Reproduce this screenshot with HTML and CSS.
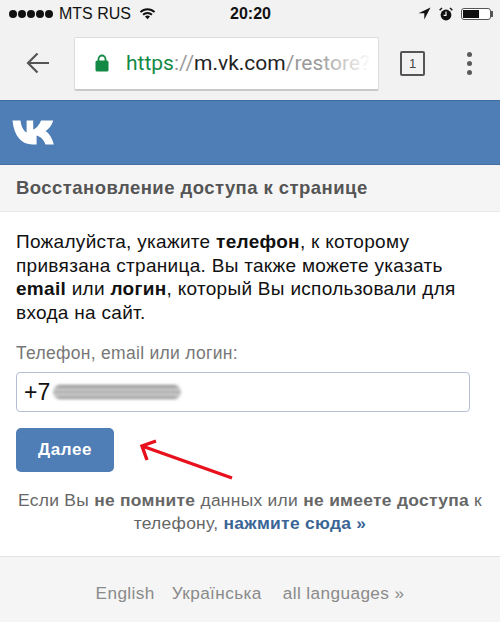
FILE: index.html
```html
<!DOCTYPE html>
<html lang="ru">
<head>
  <meta charset="UTF-8">
  <title>Восстановление доступа к странице</title>
  <meta name="viewport" content="width=device-width, initial-scale=1">
  <link rel="stylesheet" href="styles.css">
</head>
<body>
  <div class="statusbar">
    <div class="status-left">
      <span class="signal"><i></i><i></i><i></i><i></i><i></i></span>
      <span class="carrier">MTS RUS</span>
      <svg class="wifi" width="17" height="13" viewBox="0 0 17 13">
        <path d="M0.8 4.4a11 11 0 0 1 15.4 0l-1.3 1.4a9.1 9.1 0 0 0-12.8 0z" fill="#111"/>
        <path d="M3.4 7a7.4 7.4 0 0 1 10.2 0l-1.3 1.4a5.5 5.5 0 0 0-7.6 0z" fill="#111"/>
        <path d="M6 9.6a3.7 3.7 0 0 1 5 0l-2.5 2.7z" fill="#111"/>
      </svg>
    </div>
    <div class="clock">20:20</div>
    <div class="status-right">
      <svg width="13" height="13" viewBox="0 0 13 13"><path d="M12.5 0.5L0.5 6.3h5.8v6.2z" fill="#111"/></svg>
      <svg width="14" height="14" viewBox="0 0 14 14">
        <circle cx="7" cy="8" r="5.4" fill="#111"/>
        <path d="M7 4.6V8.4H4.6" fill="none" stroke="#f2f2f2" stroke-width="1.2"/>
        <path d="M0.6 3.2L3 0.9M13.4 3.2L11 0.9" stroke="#111" stroke-width="1.4"/>
      </svg>
      <span class="battery"><span class="battery-level"></span></span>
    </div>
  </div>

  <div class="toolbar">
    <svg class="back" width="24" height="22" viewBox="0 0 24 22">
      <path d="M23 11H2.5M11.5 1.5L2 11l9.5 9.5" fill="none" stroke="#555" stroke-width="2.2"/>
    </svg>
    <div class="urlbar">
      <svg class="lock" width="14" height="18" viewBox="0 0 14 18">
        <path d="M3.5 7V5a3.5 3.5 0 0 1 7 0v2" fill="none" stroke="#128a45" stroke-width="1.8"/>
        <rect x="0.5" y="6.5" width="13" height="11" rx="1.5" fill="#128a45"/>
      </svg>
      <span class="url"><span class="url-https">https</span><span class="url-sep">://</span><span class="url-host">m.vk.com</span><span class="url-path">/restore?</span></span>
    </div>
    <div class="tabs">1</div>
    <div class="menu"><i></i><i></i><i></i></div>
  </div>

  <div class="header">
    <svg width="42" height="26" viewBox="0 0 42 26">
      <path d="M0.5 1.5H8.5C9.2 7 11 11.5 14.6 13.6V1.5H21.2V10.6C24.5 9.5 27.5 5.5 29 1.5H41.2C40 6.5 36.5 10 33.6 12.2C37 14 40 18.5 41.8 25.5H33.5C31.8 21 28.5 17.5 24.6 16.6V25.5H20.5C9.5 25.5 2 17 0.5 1.5Z" fill="#fff"/>
    </svg>
  </div>

  <div class="title-bar">Восстановление доступа к странице</div>

  <div class="content">
    <p class="intro">Пожалуйста, укажите <b>телефон</b>, к которому<br>привязана страница. Вы также можете указать<br><b>email</b> или <b>логин</b>, который Вы использовали для<br>входа на сайт.</p>
    <div class="field-label">Телефон, email или логин:</div>
    <div class="field">+7<span class="blur"></span></div>
    <div class="action">
      <button class="btn" type="button">Далее</button>
      <svg class="arrow" width="96" height="42" viewBox="0 0 96 42">
        <path d="M93 40L3 8M17 3L3 8l5 14" fill="none" stroke="#e8101c" stroke-width="3.4"/>
      </svg>
    </div>
    <p class="note">Если Вы <b>не помните</b> данных или <b>не имеете доступа</b> к<br>телефону, <a href="#">нажмите сюда »</a></p>
  </div>

  <div class="footer">
    <a href="#">English</a>
    <a href="#">Українська</a>
    <a class="all-langs" href="#">all languages »</a>
  </div>
</body>
</html>
```

FILE: styles.css
```css
html, body {
  margin: 0;
  padding: 0;
}
body {
  width: 500px;
  height: 623px;
  overflow: hidden;
  background: #fff;
  font-family: 'Liberation Sans', Arial, sans-serif;
  color: #111;
}
.statusbar {
  height: 27px;
  background: #f2f2f2;
  display: flex;
  align-items: center;
  justify-content: space-between;
  padding: 0 9px;
  position: relative;
  font-size: 16px;
}
.status-left, .status-right {
  display: flex;
  align-items: center;
}
.signal {
  display: flex;
  gap: 1px;
  margin-right: 6px;
}
.signal i {
  width: 8px;
  height: 8px;
  border-radius: 50%;
  background: #111;
}
.wifi {
  margin-left: 8px;
}
.clock {
  position: absolute;
  left: 230px;
  top: 5px;
  font-weight: bold;
  font-size: 16px;
}
.status-right {
  gap: 8px;
}
.battery {
  width: 30px;
  height: 12px;
  border: 1px solid #555;
  border-radius: 3px;
  padding: 1px;
  box-sizing: border-box;
  background: #fff;
  display: block;
  position: relative;
}
.battery::after {
  content: "";
  position: absolute;
  right: -3px;
  top: 2px;
  width: 2px;
  height: 6px;
  background: #555;
}
.battery-level {
  display: block;
  width: 16px;
  height: 8px;
  background: #111;
}
.toolbar {
  height: 74px;
  background: #f2f2f2;
  display: flex;
  align-items: center;
  padding-left: 26px;
  padding-bottom: 1px;
  box-sizing: border-box;
  border-bottom: 1px solid #3f6c9f;
}
.back {
  flex: none;
}
.urlbar {
  flex: none;
  width: 305px;
  height: 54px;
  margin: 1px 0 0 24px;
  background: #fff;
  border: 1px solid #dcdcdc;
  border-bottom: 2px solid #c9c9c9;
  border-radius: 2px;
  box-sizing: border-box;
  display: flex;
  align-items: center;
  padding-left: 20px;
  position: relative;
  overflow: hidden;
}
.urlbar::after {
  content: "";
  position: absolute;
  right: 0;
  top: 0;
  bottom: 0;
  width: 60px;
  background: linear-gradient(90deg, rgba(255,255,255,0), #fff 90%);
}
.lock {
  flex: none;
}
.url {
  margin-left: 17px;
  font-family: 'Roboto', sans-serif;
  font-size: 21px;
  white-space: nowrap;
}
.url-https {
  color: #128a45;
}
.url-sep, .url-path {
  color: #9a9a9a;
}
.url-host {
  color: #222;
}
.tabs {
  width: 21px;
  height: 21px;
  border: 2px solid #555;
  border-radius: 2px;
  margin-left: 21px;
  display: flex;
  align-items: center;
  justify-content: center;
  font-size: 13px;
  color: #444;
}
.menu {
  margin-left: 42px;
  display: flex;
  flex-direction: column;
  gap: 4px;
}
.menu i {
  display: block;
  width: 5px;
  height: 5px;
  border-radius: 50%;
  background: #5a5a5a;
}
.header {
  height: 64px;
  background: #4f7db5;
  border-bottom: 1px solid #4470a6;
  box-sizing: border-box;
  padding: 18px 0 0 12px;
}
.header svg {
  display: block;
}
.title-bar {
  height: 47px;
  line-height: 46px;
  background: #f5f5f5;
  border-bottom: 1px solid #e9e9e9;
  box-sizing: border-box;
  padding-left: 16px;
  font-size: 18.5px;
  font-weight: bold;
  color: #555;
  letter-spacing: 0.45px;
}
.content {
  padding: 18px 16px 0;
}
.intro {
  margin: 0;
  font-size: 19px;
  line-height: 23.5px;
  color: #111;
  letter-spacing: 0.3px;
  white-space: nowrap;
}
.field-label {
  margin-top: 19px;
  font-size: 17.5px;
  color: #777;
  letter-spacing: 0.3px;
}
.field {
  margin-top: 8px;
  width: 454px;
  height: 40px;
  box-sizing: border-box;
  border: 1px solid #b4bfd4;
  border-radius: 4px;
  padding-left: 7px;
  font-size: 23px;
  display: flex;
  align-items: center;
}
.blur {
  display: block;
  width: 128px;
  height: 14px;
  margin-left: 3px;
  border-radius: 7px;
  background: linear-gradient(#777, #ddd 35%, #999 50%, #ddd 70%, #777);
  filter: blur(1.5px);
}
.action {
  margin-top: 16px;
  display: flex;
  align-items: flex-start;
}
.btn {
  width: 98px;
  height: 44px;
  background: #4f7db5;
  color: #fff;
  border: none;
  border-radius: 5px;
  font-family: inherit;
  font-size: 17px;
  font-weight: bold;
  letter-spacing: 0.6px;
  padding: 0;
}
.arrow {
  margin: 10px 0 0 25px;
}
.note {
  margin: 9px 0 0;
  text-align: center;
  font-size: 17.4px;
  line-height: 23px;
  color: #666;
  letter-spacing: 0.3px;
  white-space: nowrap;
}
.note b {
  color: #666;
}
.note a {
  color: #3a6595;
  font-weight: bold;
  text-decoration: none;
}
.footer {
  margin-top: 21px;
  height: 66px;
  box-sizing: border-box;
  padding-top: 8px;
  background: #f5f5f5;
  border-top: 1px solid #e2e2e2;
  display: flex;
  justify-content: center;
  align-items: center;
  gap: 17px;
}
.footer a {
  color: #8a8a8a;
  font-size: 17.2px;
  letter-spacing: 0.4px;
  text-decoration: none;
}
.footer .all-langs {
  margin-left: 4px;
}
```
